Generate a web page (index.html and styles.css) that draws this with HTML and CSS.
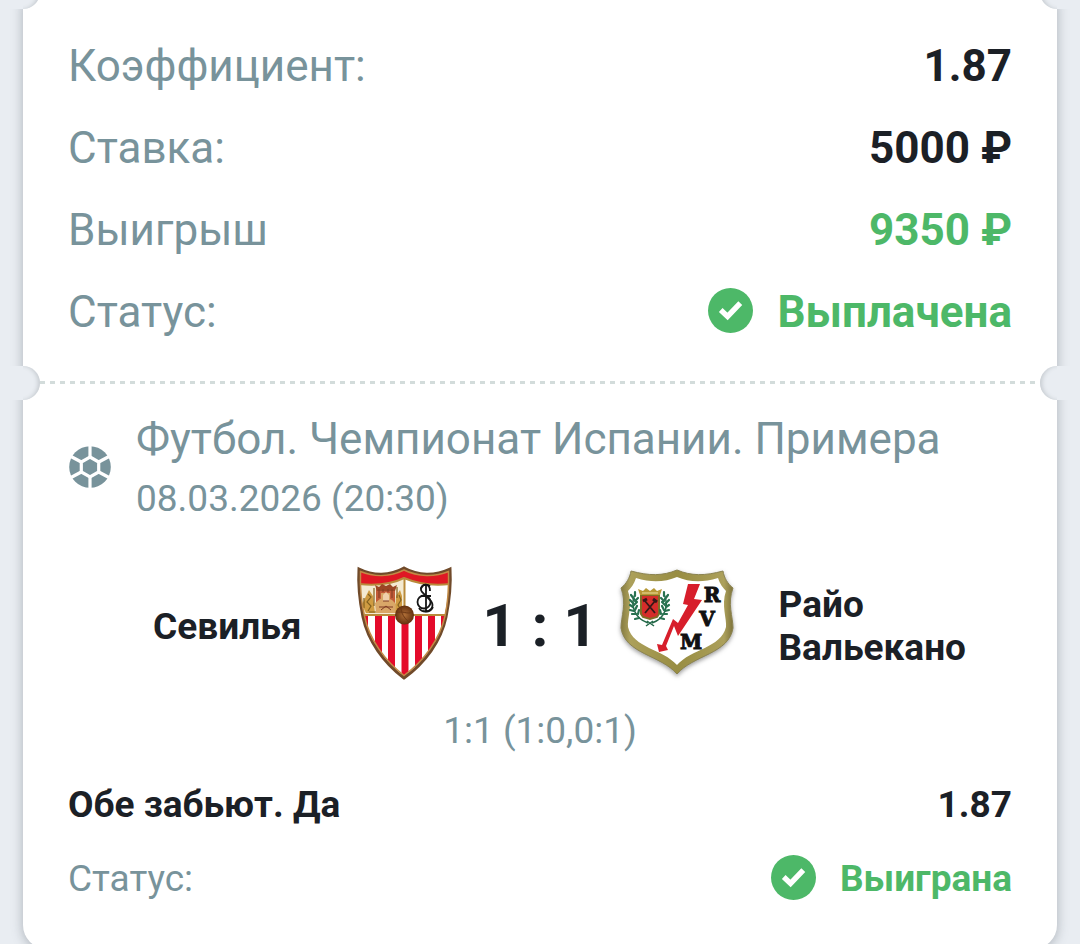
FILE: index.html
```html
<!DOCTYPE html>
<html lang="ru">
<head>
<meta charset="utf-8">
<meta name="viewport" content="width=device-width, initial-scale=1">
<title>Купон</title>
<link rel="stylesheet" href="styles.css">
</head>
<body>
<svg class="defs" aria-hidden="true">
  <symbol id="check" viewBox="0 0 46 46">
    <circle cx="23" cy="23" r="23" fill="#4db868"/>
    <path d="M13 22.500L20 29L33 15.500" fill="none" stroke="#fff" stroke-width="5.500"/>
  </symbol>
</svg>
<main class="ticket">
  <section class="summary">
    <span class="notch notch-left"></span>
    <span class="notch notch-right"></span>
    <dl class="rows">
      <div class="row"><dt>Коэффициент:</dt><dd>1.87</dd></div>
      <div class="row"><dt>Ставка:</dt><dd>5000 ₽</dd></div>
      <div class="row"><dt>Выигрыш</dt><dd class="win">9350 ₽</dd></div>
      <div class="row"><dt>Статус:</dt><dd class="win"><svg class="check"><use href="#check"/></svg>Выплачена</dd></div>
    </dl>
  </section>
  <section class="event">
    <span class="notch notch-left"></span>
    <span class="notch notch-right"></span>
    <svg class="tear" aria-hidden="true"><line x1="0" y1="1.500" x2="100%" y2="1.500" stroke="#d3dcdb" stroke-width="3" stroke-dasharray="5 5"/></svg>
    <header class="event-head">
      <svg class="ball" viewBox="0 0 42 42" aria-hidden="true">
        <circle cx="21" cy="21" r="20.800" fill="#78939b"/>
        <g fill="none" stroke="#fff" stroke-width="3.200">
          <path d="M21 11L29.700 16V26L21 31L12.300 26V16Z"/>
          <path d="M21 11V0M29.700 16L40 10.500M29.700 26L40 31.500M21 31V42M12.300 26L2 31.500M12.300 16L2 10.500"/>
        </g>
      </svg>
      <div>
        <h1 class="league">Футбол. Чемпионат Испании. Примера</h1>
        <time class="date" datetime="2026-03-08T20:30">08.03.2026 (20:30)</time>
      </div>
    </header>
    <div class="match">
      <p class="team home">Севилья</p>
      <svg class="crest" viewBox="0 0 114 114" role="img" aria-label="Севилья">
        <defs>
          <clipPath id="sev"><path d="M12 4C26 11 43 11 57 3C71 11 88 11 103 4C104 20 102 37 99 52C94 76 78 98 57 113C37 98 21 76 16 52C13 37 11 20 12 4Z"/></clipPath>
          <radialGradient id="ballGrad"><stop offset="0" stop-color="#b06f37"/><stop offset="1" stop-color="#63300f"/></radialGradient>
        </defs>
        <g clip-path="url(#sev)">
          <rect width="114" height="114" fill="#fff"/>
          <path d="M0 0H114V19C94 21 72 20 58 13C42 20 24 21 0 19Z" fill="#df1824"/>
          <path d="M12 51h9v60h-9zM28 51h7v60h-7zM41 51h7v60h-7zM54.500 51h7v60h-7zM68 51h7v60h-7zM81 51h7v60h-7zM94 51h9v60h-9z" fill="#e40b2b"/>
          <path d="M12 19C32 21 45 19 57 13V50H12Z" fill="#f4ead2"/>
          <path d="M12 19C32 21 45 19 57 13C71 19 85 21 103 19M57.500 13V50M12 50H103" fill="none" stroke="#b98a3a" stroke-width="2"/>
        </g>
        <path d="M29 23h19v18H29Z" fill="#c25a38"/>
        <path d="M28 20l4 2 3-3 4 2 4-2 3 3 4-2-2 6H30Z" fill="#9b4625"/>
        <path d="M34 28h9v12h-9zM28 38l5-4 6-2 6 3 4 4-1 9H29Z" fill="#d9a768"/>
        <path d="M36 30l3-3 3 3v6h-6Z" fill="#f0cfaa"/>
        <path d="M32 24v9M36 24v3M41 24v3M45 24v9M32 42h14M34 45l5-4 5 4M36 36h6" fill="none" stroke="#7e3a22"/>
        <path d="M19 31l3-6 4 6 2 17h-9l-4-8ZM49 31l4-6 2 6v15l-3 2h-4Z" fill="#cf9c42"/>
        <path d="M21 29l3 3-4 5 4 4-3 5M52 30l2 5-3 5 3 5M17 33v10M27 23v18M50 22v11M22 47h7" fill="none" stroke="#82601f" stroke-width="1.200"/>
        <g fill="none" stroke="#161616" stroke-width="1.800">
          <path d="M83 21C77 17 72 23 75 27L84 36C88 42 83 48 76 46M79 20V47M74 31H84"/>
          <circle cx="77" cy="37" r="6.500"/>
          <path d="M83 26C83 17 74 19 74 24M72 43C75 48 83 48 86 42"/>
        </g>
        <circle cx="57.500" cy="50" r="9.500" fill="url(#ballGrad)"/>
        <path d="M49 48C55 45 61 50 65 47M54 42C54 48 57 53 62 57" stroke="#6d3916" fill="none"/>
        <path d="M12 4C26 11 43 11 57 3C71 11 88 11 103 4C104 20 102 37 99 52C94 76 78 98 57 113C37 98 21 76 16 52C13 37 11 20 12 4Z" fill="none" stroke="#704a2a" stroke-width="3"/>
        <path d="M13.500 6.500C27 12 43 12 57 5C71 12 88 12 101.500 6.500C102 22 101 37 98 51C93 74 77 96 57 110.500C38 96 22 74 17.500 51C14 37 13 22 13.500 6.500Z" fill="none" stroke="#c28a45" stroke-width="1.500"/>
      </svg>
      <strong class="score">1 : 1</strong>
      <svg class="crest" viewBox="0 0 114 114" role="img" aria-label="Райо Вальекано">
        <defs><linearGradient id="gold" x2="1"><stop stop-color="#857b40"/><stop offset=".08" stop-color="#aca05b"/><stop offset=".5" stop-color="#988d42"/><stop offset=".92" stop-color="#aca05b"/><stop offset="1" stop-color="#7e733b"/></linearGradient></defs>
        <path class="crest-shadow" d="M11 6C29 11 43 11 57 5C71 11 85 11 103 6C104 13 108 19 113 23C107 38 113 52 113 63C109 89 73 90 57 109C41 90 5 89 1 63C1 52 7 38 1 23C6 19 10 13 11 6Z" fill="url(#gold)" stroke="#8b8350"/>
        <path d="M16 13C32 18 45 17 57 12C69 17 82 18 98 13C100 19 103 23 106 26C101 40 107 54 106 62C101 83 71 84 57 100C43 84 13 83 8 62C7 54 13 40 8 26C11 23 14 19 16 13Z" fill="#fff"/>
        <path d="M68 19H80L74 34L82 35L58 71L54 61L46 81L48 85L39 87L37 79L42 80L53 54L58 58L68 40L63 39Z" fill="#d71e2b"/>
        <path d="M21 30h18v19l-2 3-7 2-7-2-2-3Z" fill="#d52d2a" stroke="#806d26" stroke-width="2"/>
        <path d="M20 30l-2-6 5 2 3-3 4 3 4-3 3 3 5-2-2 6Z" fill="#b79936"/>
        <path d="M22 28h16" stroke="#eee09c"/>
        <path d="M25 36l10 12M35 36L25 48" stroke="#351818" stroke-width="1.800"/>
        <path d="M23 36l4-2M33 34l4 3" stroke="#351818" stroke-width="3"/>
        <path d="M15 29C10 40 14 53 28 58M44 29C49 40 46 53 32 58M26 61l7-5M34 61l-7-5" fill="none" stroke="#246949" stroke-width="1.500"/>
        <path d="M15 31v-4M14 34l-3-4M13 38l-3-3M13 42l-3-2M14 46l-4-1M16 49l-4 0M19 53l-4 1M15 36l3-3M14 40l3-3M15 45l2-4M18 49l1-4M44 31v-4M45 34l3-4M46 38l3-3M46 42l3-2M45 46l4-1M43 49l4 0M40 53l4 1M44 36l-3-3M45 40l-3-3M44 45l-2-4M41 49l-1-4" stroke="#287250" stroke-width="2.200" stroke-linecap="round"/>
        <g class="crest-letters"><text x="92" y="37">R</text><text x="87" y="61">V</text><text x="71" y="84">M</text></g>
      </svg>
      <p class="team away">Райо Вальекано</p>
    </div>
    <p class="periods">1:1 (1:0,0:1)</p>
    <div class="row small bet"><span>Обе забьют. Да</span><span>1.87</span></div>
    <div class="row small"><span>Статус:</span><span class="win"><svg class="check"><use href="#check"/></svg>Выиграна</span></div>
  </section>
</main>
</body>
</html>
```
FILE: styles.css
```css
* { box-sizing: border-box; }

body {
  margin: 0;
  background: #e9edf2;
  color: #1b2026;
  font-family: Roboto, "Noto Sans", sans-serif;
  font-size: 44px;
  line-height: 52px;
  overflow: hidden;
}

h1, p, dl, dd { margin: 0; }

.defs { position: absolute; width: 0; height: 0; }

.ticket {
  margin: 0 23px;
  background: #fff;
  border-radius: 0 0 24px 24px;
  box-shadow: 0 2px 12px rgba(80, 90, 100, .4);
}

.summary, .event { position: relative; padding: 0 45px; }
.summary { padding-top: 40px; padding-bottom: 45px; }
.event { padding-top: 30px; padding-bottom: 44px; }

.notch {
  position: absolute;
  width: 34px;
  height: 34px;
  top: -17px;
  border-radius: 50%;
  background: #e9edf2;
}
.summary .notch { top: -25px; }
.notch-left { left: -17px; box-shadow: inset -3px 0 4px -1px #c6cbd0; }
.notch-right { right: -17px; box-shadow: inset 3px 0 4px -1px #c6cbd0; }
.notch::after {
  content: "";
  position: absolute;
  top: 0;
  width: 17px;
  height: 34px;
  background: #e9edf2;
}
.notch-left::after { left: 0; }
.notch-right::after { right: 0; }

.tear {
  position: absolute;
  top: -2px;
  left: 17px;
  width: calc(100% - 34px);
  height: 3px;
}

.rows { display: grid; gap: 30px; }

.row {
  display: flex;
  justify-content: space-between;
  align-items: center;
  color: #78939b;
}
.row > :last-child {
  display: flex;
  align-items: center;
  color: #1b2026;
  font-weight: 700;
}
.row > .win { color: #4db868; }

.check { width: 45px; height: 45px; margin: -6px 24px -2px 0; }

.event-head {
  display: flex;
  align-items: center;
  gap: 25px;
  padding: 0 1px;
  color: #78939b;
}
.ball { flex: none; width: 42px; height: 42px; }
.league { font-size: 44px; font-weight: 400; line-height: 52px; }
.date { display: block; margin-top: 12px; font-size: 37px; line-height: 44px; }

.match {
  display: grid;
  grid-template-columns: 1fr 114px 159px 114px 1fr;
  align-items: center;
  margin-top: 44px;
}
.team { padding: 0 45px; font-size: 37px; font-weight: 700; line-height: 43px; }
.home { text-align: right; }
.crest { width: 114px; height: 114px; margin-bottom: 8px; overflow: visible; }
.crest-shadow { filter: drop-shadow(0 2px 2px rgba(60, 60, 60, .5)); }
.crest-letters {
  font: 700 20px "DejaVu Serif", serif;
  text-anchor: middle;
  fill: #111;
  stroke: #111;
  stroke-width: 1px;
}
.score { font-size: 60px; text-align: center; white-space: nowrap; }

.periods {
  margin-top: 22px;
  color: #78939b;
  font-size: 37px;
  line-height: 44px;
  text-align: center;
}

.small { margin-top: 22px; font-size: 37px; }
.bet { margin-top: 26px; color: #1b2026; font-weight: 700; }
```
